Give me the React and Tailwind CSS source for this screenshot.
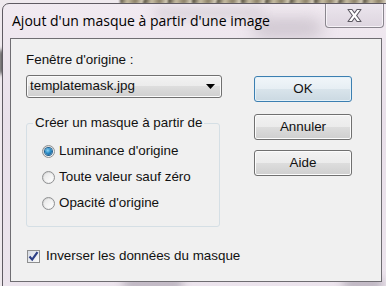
import { useState } from "react";

const RadioDot = ({ checked }) => (
    <span className="relative flex h-[13px] w-[13px] flex-shrink-0 items-center justify-center rounded-full border border-[#8f9092] bg-gradient-to-br from-[#d0d0d0] to-[#fbfbfb]">
        <span className="h-[9px] w-[9px] rounded-full bg-gradient-to-br from-[#e6e6e6] to-[#ffffff]" />
        {checked && (
            <span className="absolute left-[2px] top-[2px] h-[7px] w-[7px] rounded-full bg-[radial-gradient(circle_at_40%_35%,#8fd6f6_0%,#2a8dc8_45%,#12487a_100%)] shadow-[0_0_0_1px_#1f5f8f]" />
        )}
    </span>
);

const Radio = ({ label, checked, onClick }) => (
    <div className="flex h-[26px] items-center gap-[4px] pl-[15px] cursor-default" onClick={onClick}>
        <RadioDot checked={checked} />
        <span>{label}</span>
    </div>
);

const Button = ({ children, primary, className }) => (
    <div
        className={`flex h-[26px] w-[98px] items-center justify-center rounded-[3px] border ${
            primary
                ? "border-[#3c7fb1] bg-[linear-gradient(#f1f6f9_0%,#e6eef3_50%,#d9e4eb_50%,#cbd9e2_100%)] shadow-[inset_0_0_0_1px_#e4f1f8]"
                : "border-[#707070] bg-[linear-gradient(#f2f2f2_0%,#ebebeb_50%,#dddddd_50%,#cfcfcf_100%)] shadow-[inset_0_0_0_1px_#fcfcfc]"
        } ${className}`}
    >
        {children}
    </div>
);

const App = () => {
    const [mode, setMode] = useState(0);
    const [invert, setInvert] = useState(true);
    const options = ["Luminance d'origine", "Toute valeur sauf zéro", "Opacité d'origine"];

    return (
        <div className="relative h-[286px] w-[386px] overflow-hidden bg-[#efe9ee] font-['Liberation_Sans',Arial,sans-serif] text-[13.4px] text-[#111]">
            {/* blurred desktop behind the glass */}
            <div className="absolute left-[120px] top-[-4px] h-[8px] w-[266px] bg-[repeating-linear-gradient(100deg,#4a4436_0px,#c9bfa4_8px,#8a7f66_16px,#e4dcc8_24px)] blur-[1px]" />
            <div className="absolute left-0 top-[50px] h-[24px] w-[4px] bg-[#202020] blur-[2px]" />

            {/* window */}
            <div className="relative ml-[2px] mt-[3px] h-[290px] w-[392px] overflow-hidden rounded-t-[7px] border border-[#5f5a62] bg-[linear-gradient(180deg,#f1eaf1_0%,#e9e0ea_40%,#ece4ed_100%)]">
                <div className="absolute left-[250px] top-[14px] h-[20px] w-[70px] rounded-full bg-[#b9b0bb] opacity-60 blur-[8px]" />
                <div className="absolute left-[150px] top-[4px] h-[10px] w-[110px] rounded-full bg-[#c8c0c8] opacity-60 blur-[6px]" />
                <div className="absolute left-[120px] top-[276px] h-[8px] w-[60px] rounded-full bg-[#8a8290] opacity-70 blur-[5px]" />
                <div className="absolute left-[340px] top-[276px] h-[8px] w-[40px] rounded-full bg-[#8a8290] opacity-70 blur-[5px]" />

                {/* title bar */}
                <div className="relative flex h-[34px] items-center pl-[9px] pb-[1px]">
                    <span className="font-['Open_Sans',sans-serif] text-[14px] leading-none text-black">
                        Ajout d'un masque à partir d'une image
                    </span>
                    <div className="absolute right-[9px] top-[-1px] flex h-[25px] w-[59px] items-center justify-center rounded-b-[4px] border border-t-0 border-[#8a868e] bg-[linear-gradient(#ece6ee,#ddd5df)] shadow-[inset_0_0_0_1px_#f6f2f7]">
                        <svg width="17" height="15" viewBox="0 0 17 15">
                            <path
                                d="M2 1.5 H6 L8.5 5 L11 1.5 H15 L10.6 7.5 L15 13.5 H11 L8.5 10 L6 13.5 H2 L6.4 7.5 Z"
                                fill="#ffffff"
                                stroke="#5c5862"
                                strokeWidth="1.1"
                                strokeLinejoin="round"
                            />
                        </svg>
                    </div>
                </div>

                {/* client area */}
                <div className="relative ml-[7px] flex h-[244px] w-[372px] border border-[#6f6d72] bg-[#f0f0f0]">
                    <div className="flex w-[230px] flex-col pl-[15px]">
                        <div className="mt-[13px] leading-[16px]">Fenêtre d'origine :</div>
                        <div className="mt-[7px] flex h-[23px] w-[196px] items-center justify-between rounded-[3px] border border-[#707070] bg-[linear-gradient(#f2f2f2_0%,#ebebeb_50%,#dddddd_50%,#cfcfcf_100%)] pl-[3px] pr-[6px] shadow-[inset_0_0_0_1px_#fbfbfb]">
                            <span>templatemask.jpg</span>
                            <svg width="9" height="5" viewBox="0 0 9 5">
                                <path d="M0 0 H9 L4.5 5 Z" fill="#000" />
                            </svg>
                        </div>

                        {/* group box */}
                        <div className="relative mt-[25px] h-[104px] w-[194px] rounded-[3px] border border-[#d5dfe5] pt-[14px]">
                            <span className="absolute left-[6px] top-[-9px] bg-[#f0f0f0] px-[2px] leading-[16px]">
                                Créer un masque à partir de
                            </span>
                            {options.map((label, i) => (
                                <Radio key={label} label={label} checked={mode === i} onClick={() => setMode(i)} />
                            ))}
                        </div>

                        <div className="mt-[21px] flex items-center gap-[6px] pl-[1px]" onClick={() => setInvert(!invert)}>
                            <span className="flex h-[13px] w-[13px] items-center justify-center border border-[#8e8f8f] bg-gradient-to-br from-[#d6dbe4] to-[#fbfbfb]">
                                {invert && (
                                    <svg width="11" height="11" viewBox="0 0 11 11">
                                        <path d="M1.5 5.5 L4.2 8.6 L9.5 1.2" fill="none" stroke="#2c3f86" strokeWidth="2.2" />
                                    </svg>
                                )}
                            </span>
                            <span className="leading-[16px]">Inverser les données du masque</span>
                        </div>
                    </div>

                    <div className="flex flex-col pl-[13px] pt-[37px]">
                        <Button primary>OK</Button>
                        <Button className="mt-[12px]">Annuler</Button>
                        <Button className="mt-[10px]">Aide</Button>
                    </div>
                </div>
            </div>
        </div>
    );
};

export default App;
